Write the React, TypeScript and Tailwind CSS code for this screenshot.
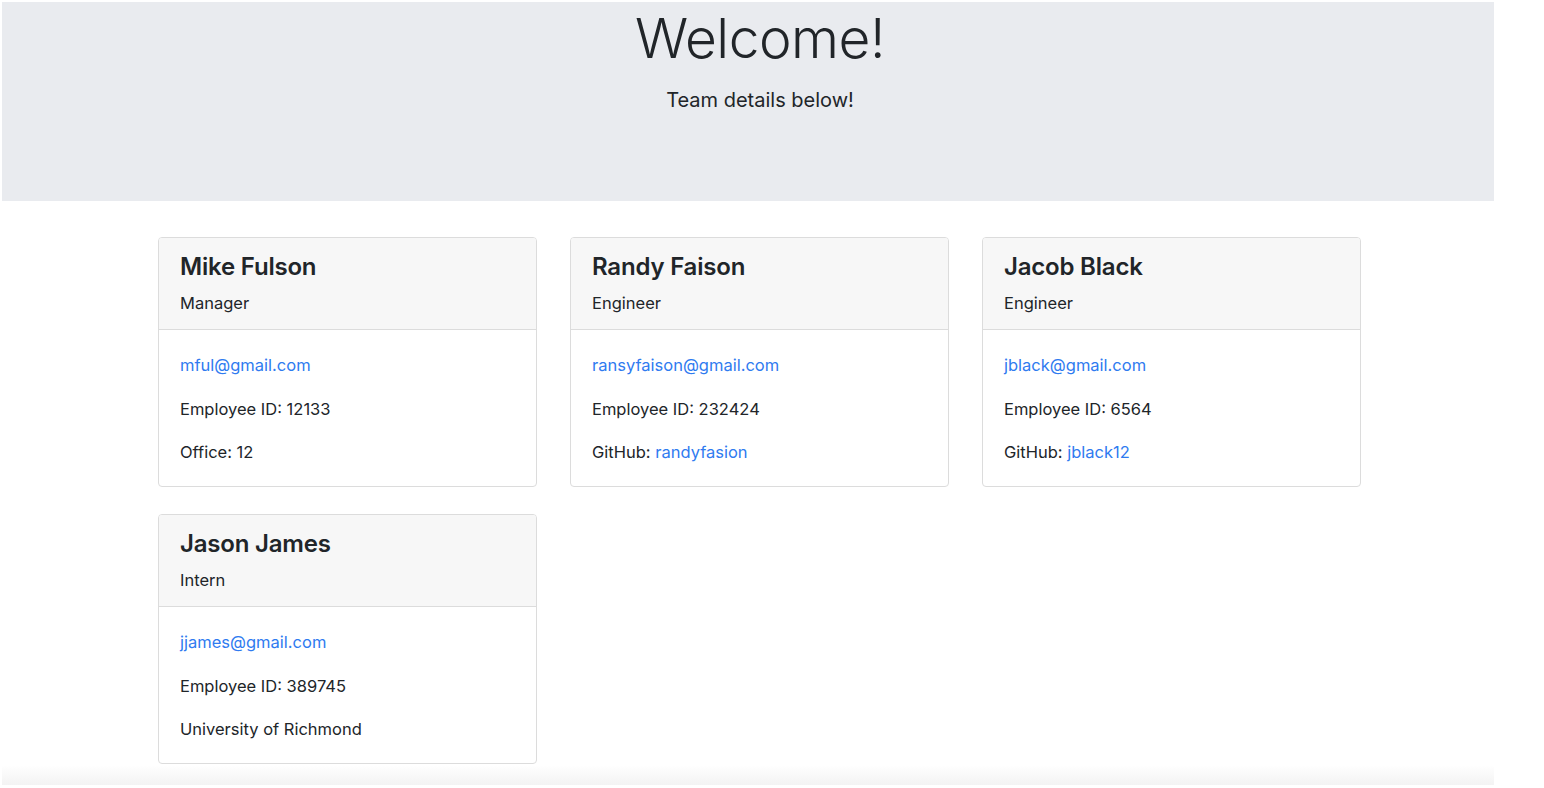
const team = [
  { name: "Mike Fulson", role: "Manager", email: "mful@gmail.com", id: "12133", extra: { label: "Office: 12" } },
  { name: "Randy Faison", role: "Engineer", email: "ransyfaison@gmail.com", id: "232424", extra: { label: "GitHub: ", link: "randyfasion" } },
  { name: "Jacob Black", role: "Engineer", email: "jblack@gmail.com", id: "6564", extra: { label: "GitHub: ", link: "jblack12" } },
  { name: "Jason James", role: "Intern", email: "jjames@gmail.com", id: "389745", extra: { label: "University of Richmond" } },
];

type Member = (typeof team)[number];

const Card = ({ m }: { m: Member }) => (
  <div className="w-[379px] border border-[#dcdcdc] rounded-[4px] bg-white overflow-hidden">
    <div className="h-[92px] bg-[#f7f7f7] border-b border-[#dcdcdc] px-[21px] pt-[13px]">
      <h2 className="text-[24px] leading-[32px] font-semibold tracking-[-0.2px] text-[#212529]">{m.name}</h2>
      <p className="mt-[7px] text-[16.5px] leading-[26px] text-[#212529]">{m.role}</p>
    </div>
    <div className="h-[156px] px-[21px] pt-[22px] flex flex-col gap-[17.5px] text-[16.5px] leading-[26px] text-[#212529]">
      <a href="#" className="text-[#2f7bf0]">{m.email}</a>
      <p>Employee ID: {m.id}</p>
      <p>
        {m.extra.label}
        {m.extra.link && <a href="#" className="text-[#2f7bf0]">{m.extra.link}</a>}
      </p>
    </div>
  </div>
);

export default function App() {
  return (
    <div className="min-h-[788px] bg-white font-['Inter','Noto_Sans',sans-serif] p-[2px]">
      <div className="w-[1492px]">
        <header className="h-[199px] bg-[#e9ebef]">
          <div className="w-[1204px] ml-[156px] text-center text-[#212529] pt-[4px]">
            <h1 className="text-[55px] leading-[64px] font-light tracking-[-0.5px]">Welcome!</h1>
            <p className="mt-[16px] text-[20px] leading-[28px]">Team details below!</p>
          </div>
        </header>
        <main className="w-[1204px] ml-[156px] mt-[36px] flex flex-wrap gap-x-[33px] gap-y-[27px]">
          {team.map((m) => (
            <Card key={m.name} m={m} />
          ))}
        </main>
        <div className="mt-px h-[20px] bg-gradient-to-b from-white to-[#f3f3f3]" />
      </div>
    </div>
  );
}
